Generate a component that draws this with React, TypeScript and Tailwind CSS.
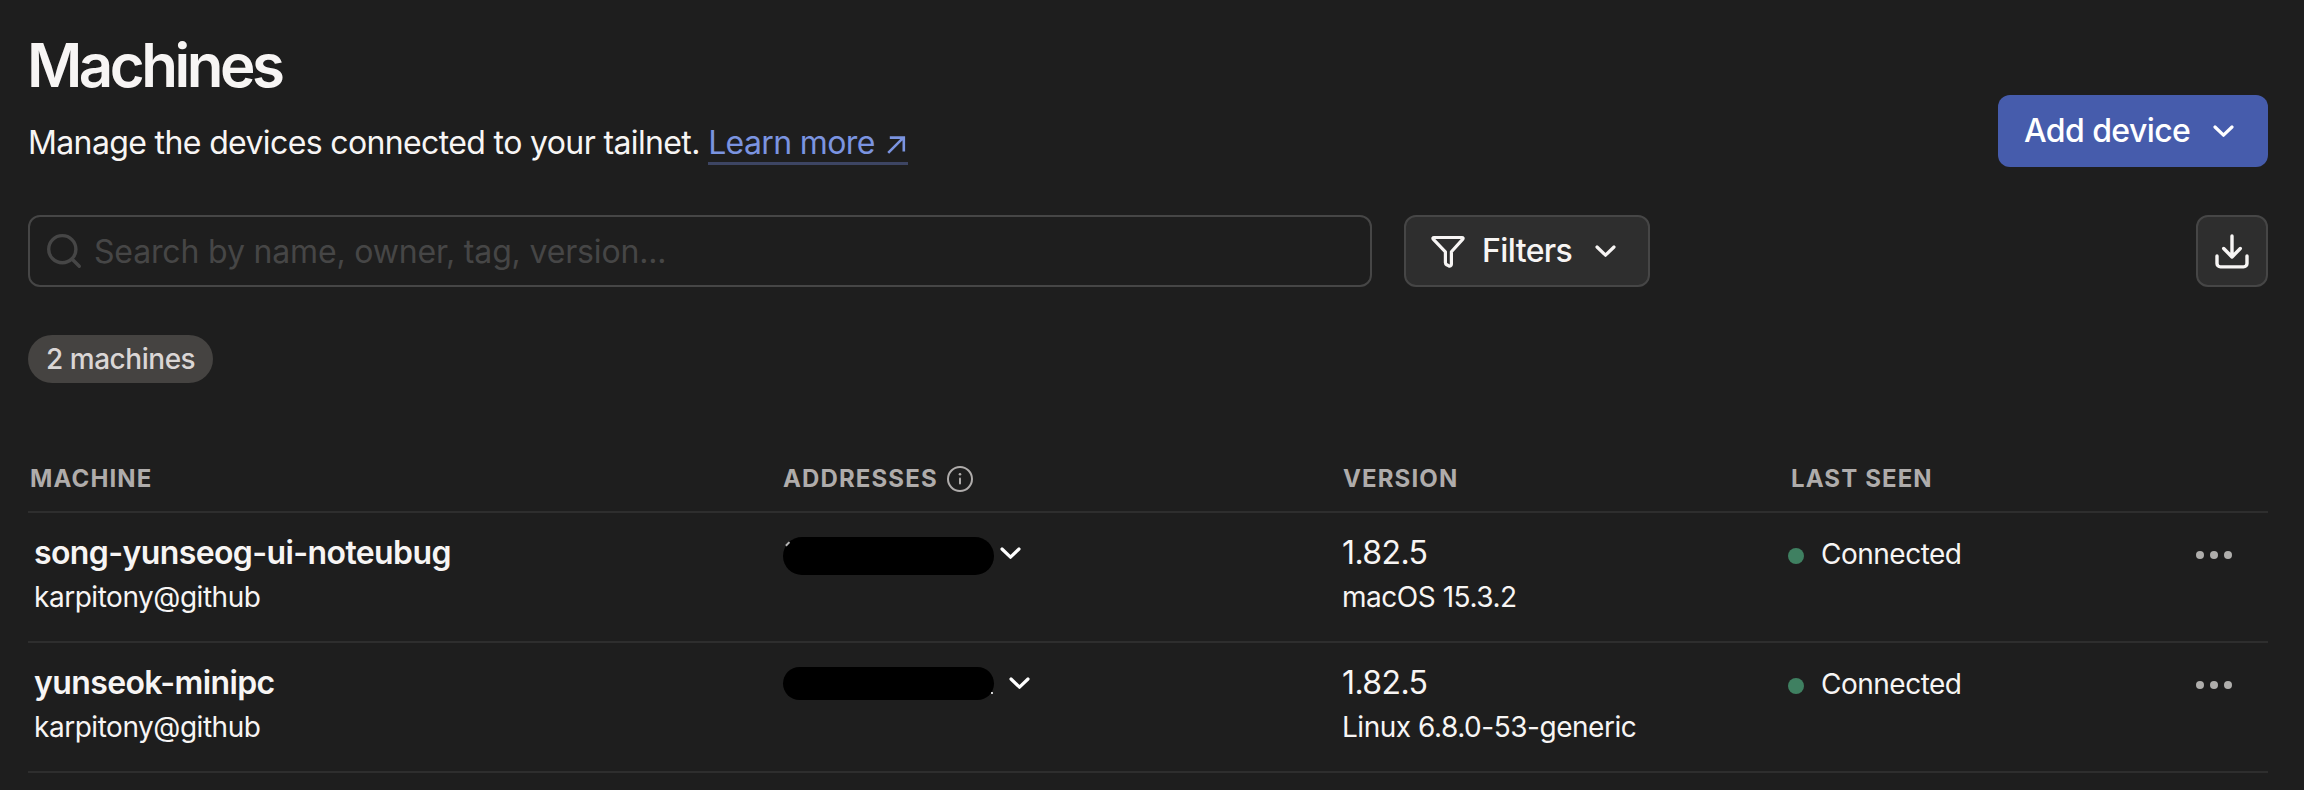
import type { ReactNode } from "react";

function Chevron() {
  return (
    <svg className="block h-3 w-[21px] shrink-0" viewBox="0 0 21 12" fill="none" stroke="currentColor" strokeWidth="3.2" strokeLinecap="round" strokeLinejoin="round">
      <path d="M2 2l8.5 8.2L19 2" />
    </svg>
  );
}

function SearchIcon() {
  return (
    <svg className="block size-9 shrink-0" viewBox="0 0 36 36" fill="none" stroke="currentColor" strokeWidth="3.4" strokeLinecap="round">
      <circle cx="16.3" cy="16.2" r="13.6" />
      <path d="M26 26l7.3 7.3" />
    </svg>
  );
}

function FilterIcon() {
  return (
    <svg className="block size-9 shrink-0" viewBox="0 0 36 36" fill="none" stroke="currentColor" strokeWidth="3.2" strokeLinecap="round" strokeLinejoin="round">
      <path d="M4 4.5h28c1 0 1.4.9.8 1.6L21.4 18.8v12.4c0 1.7-1.400 2.300-2.700 1.600l-2-1c-.8-.5-1.300-1.200-1.300-2.200V18.800L3.200 6.100c-.6-.7-.2-1.600.8-1.600z" />
    </svg>
  );
}

function DownloadIcon() {
  return (
    <svg className="block size-9" viewBox="0 0 36 36" fill="none" stroke="currentColor" strokeWidth="3.4" strokeLinecap="round" strokeLinejoin="round">
      <path d="M18 3v21M9.7 15.5L18 24l8.3-8.5" />
      <path d="M3 23v7.5a3.4 3.4 0 0 0 3.4 3.4h23.2a3.4 3.4 0 0 0 3.4-3.4V23" />
    </svg>
  );
}

function InfoIcon() {
  return (
    <svg className="block size-[26px]" viewBox="0 0 26 26" fill="none" stroke="currentColor" strokeWidth="2" strokeLinecap="round">
      <circle cx="13" cy="13" r="12" />
      <path d="M13 12.5v5" />
      <circle cx="13" cy="8.3" r="1.3" fill="currentColor" stroke="none" />
    </svg>
  );
}

function ArrowUpRight() {
  return (
    <svg className="ml-3 inline-block h-[18px] w-[21px] align-baseline" viewBox="0 0 21 18" fill="none" stroke="currentColor" strokeWidth="2.6">
      <path d="M1.2 16.8L16.4 1.7M2.8 1.6h14v14" />
    </svg>
  );
}

const GRID = "grid grid-cols-[755px_560px_447px_1fr] border-b-2 border-[#2e2e2e]";

function HeaderCell({ children, className }: { children: ReactNode; className?: string }) {
  return <div className={`flex items-center gap-[9px] ${className ?? ""}`}>{children}</div>;
}

interface Machine {
  name: string;
  owner: string;
  version: string;
  os: string;
  addressClass: string;
  glintClass: string;
  chevronClass: string;
}

const machines: Machine[] = [
  {
    name: "song-yunseog-ui-noteubug",
    owner: "karpitony@github",
    version: "1.82.5",
    os: "macOS 15.3.2",
    addressClass: "h-[38px]",
    glintClass: "left-[2px] top-[6px] h-[1.5px] w-[5px] -rotate-45 bg-[#b5b5b5]",
    chevronClass: "ml-[6px] mt-[10px]",
  },
  {
    name: "yunseok-minipc",
    owner: "karpitony@github",
    version: "1.82.5",
    os: "Linux 6.8.0-53-generic",
    addressClass: "h-[33px]",
    glintClass: "right-px bottom-[6px] size-[2px] bg-[#cfcfcf]",
    chevronClass: "ml-[15px] mt-[10px]",
  },
];

function MachineRow({ machine }: { machine: Machine }) {
  return (
    <div className={`${GRID} h-[130px]`}>
      <div className="pl-1.5 pt-4">
        <div className="h-12 text-[32px] leading-[48px] font-semibold tracking-[-0.61px]">{machine.name}</div>
        <div className="text-[28px] leading-10 tracking-[-0.47px]">{machine.owner}</div>
      </div>
      <div className="flex items-start pt-6">
        <div className={`relative w-[211px] rounded-full bg-black ${machine.addressClass}`}>
          <span className={`absolute ${machine.glintClass}`} />
        </div>
        <div className={`text-white ${machine.chevronClass}`}>
          <Chevron />
        </div>
      </div>
      <div className="-ml-px pt-4">
        <div className="h-12 text-[32px] leading-[48px] tracking-[-0.6px]">{machine.version}</div>
        <div className="text-[28px] leading-10 tracking-[-0.47px]">{machine.os}</div>
      </div>
      <div className="-ml-[2px] flex items-start justify-between pr-9">
        <div className="flex items-center pt-[21px]">
          <span className="mt-1 size-4 rounded-full bg-[#3f8061]" />
          <span className="ml-[17px] text-[28px] leading-10 tracking-[-0.5px]">Connected</span>
        </div>
        <div className="flex gap-1.5 pt-[38px]">
          <span className="size-2 rounded-full bg-[#afaeac]" />
          <span className="size-2 rounded-full bg-[#afaeac]" />
          <span className="size-2 rounded-full bg-[#afaeac]" />
        </div>
      </div>
    </div>
  );
}

export default function App() {
  return (
    <main className="h-[790px] w-[2304px] overflow-hidden bg-[#1e1e1e] pr-9 pl-7 font-['Inter',sans-serif] text-[#f7f5f4]">
      <header className="flex h-[215px] justify-between">
        <div className="pt-[29px]">
          <h1 className="-ml-px h-[72px] text-[60px] leading-[72px] font-semibold tracking-[-3.5px]">Machines</h1>
          <p className="mt-[18px] text-[32px] leading-[48px] tracking-[-0.63px]">
            Manage the devices connected to your tailnet.{" "}
            <a className="inline-block h-[46px] border-b-[3px] border-[#3d4563] text-[#7b94e0]">
              Learn more
              <ArrowUpRight />
            </a>
          </p>
        </div>
        <button className="mt-[95px] flex h-[72px] w-[270px] items-center justify-between rounded-[12px] bg-[#465cac] pr-[34px] pl-[26px] text-[32px] font-medium tracking-[-0.6px] text-white">
          Add device
          <Chevron />
        </button>
      </header>

      <div className="flex items-center">
        <div className="flex h-[72px] w-[1344px] items-center rounded-[12px] border-2 border-[#464646] pl-4 text-[#464646]">
          <SearchIcon />
          <span className="ml-3 pt-0.5 text-[32px] tracking-[-0.16px]">Search by name, owner, tag, version...</span>
        </div>
        <button className="ml-8 flex h-[72px] w-[246px] items-center rounded-[12px] border-2 border-[#464646] bg-[#2e2e2e] pl-6 text-[32px] font-medium tracking-[-0.6px]">
          <FilterIcon />
          <span className="ml-4">Filters</span>
          <span className="ml-[23px]">
            <Chevron />
          </span>
        </button>
        <button className="ml-auto flex size-[72px] items-center justify-center rounded-[12px] border-2 border-[#464646] bg-[#2e2e2e]">
          <DownloadIcon />
        </button>
      </div>

      <div className="mt-12 flex h-12 w-[185px] items-center rounded-full bg-[#454341] pl-[18px] text-[28px] font-medium tracking-[-0.47px] text-[#dad6d5]">
        2 machines
      </div>

      <section className="mt-[66px]">
        <div className={`${GRID} h-16 pb-0.5 text-[24px] font-bold tracking-[1.12px] text-[#afacab]`}>
          <HeaderCell className="pl-0.5">MACHINE</HeaderCell>
          <HeaderCell>
            ADDRESSES
            <InfoIcon />
          </HeaderCell>
          <HeaderCell>VERSION</HeaderCell>
          <HeaderCell className="pl-px">LAST SEEN</HeaderCell>
        </div>
        {machines.map((m) => (
          <MachineRow key={m.name} machine={m} />
        ))}
      </section>
    </main>
  );
}
